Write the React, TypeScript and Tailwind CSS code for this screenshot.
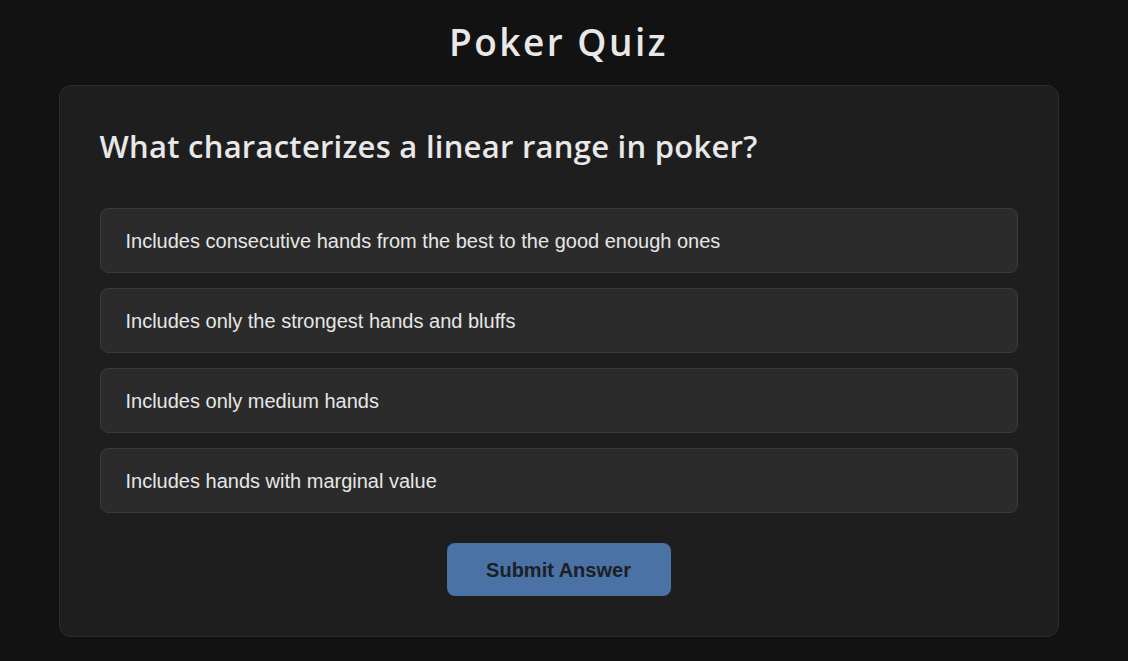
const options = [
  'Includes consecutive hands from the best to the good enough ones',
  'Includes only the strongest hands and bluffs',
  'Includes only medium hands',
  'Includes hands with marginal value',
]

export default function App() {
  return (
    <div className="min-h-[661px] bg-[#121212] pr-[11px] flex flex-col items-center font-['Liberation_Sans',Arial,sans-serif]">
      <h1 className="mt-[20px] text-[37px] leading-[44px] font-semibold text-[#e8e8e8] font-['Open_Sans',sans-serif] tracking-[2.5px]">
        Poker Quiz
      </h1>
      <div className="mt-[21px] w-[1000px] rounded-xl border border-[#2c2c2c] bg-[#1e1e1e] p-10">
        <h2 className="text-[31px] leading-[40px] font-semibold text-[#e8e8e8] font-['Open_Sans',sans-serif] tracking-[0.25px]">
          What characterizes a linear range in poker?
        </h2>
        <div className="mt-[42px] flex flex-col gap-[15px]">
          {options.map((o) => (
            <div
              key={o}
              className="h-[65px] flex items-center px-[25px] rounded-lg border border-[#3a3a3a] bg-[#2b2b2b] text-[20px] text-[#e6e6e6]"
            >
              {o}
            </div>
          ))}
        </div>
        <div className="mt-[30px] flex justify-center">
          <button className="w-[224px] h-[53px] rounded-lg bg-[#4a72a5] text-[20px] font-bold text-[#1b1f26]">
            Submit Answer
          </button>
        </div>
      </div>
    </div>
  )
}
